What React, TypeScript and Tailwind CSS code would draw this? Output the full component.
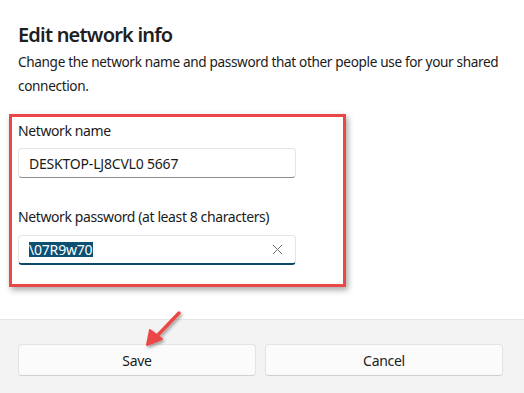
import React from "react";

export default function App() {
  const font = { fontFamily: '"Noto Sans", "Open Sans", sans-serif' };
  return (
    <div className="relative w-[524px] h-[393px] bg-white flex flex-col text-[#1b1b1b] overflow-hidden" style={font}>
      <div className="flex-1 flex flex-col px-[18px] pt-[21px]">
        <h1 className="text-[20px] leading-[28px] font-semibold tracking-[-0.8px] text-[#1f1f1f]">Edit network info</h1>
        <p className="mt-[1px] mr-[-18px] text-[13.6px] leading-[24px] tracking-[-0.35px]">
          Change the network name and password that other people use for your shared connection.
        </p>
        <div className="mt-[16px] ml-[-9px] w-[337px] border-[3px] border-[#ec4747] pl-[6px] pt-[4px] pb-[19px] shadow-[2px_3px_6px_rgba(0,0,0,0.35)] tracking-[-0.4px]">
          <div className="text-[14px] leading-[20px]">Network name</div>
          <div className="mt-[7px] w-[278px] h-[30px] rounded-[4px] border border-[#e5e5e5] border-b-[#8d8d8d] bg-white flex items-center pl-[10px] text-[14px] tracking-[-0.2px]">
            DESKTOP-LJ8CVL0 5667
          </div>
          <div className="mt-[29px] text-[14px] leading-[20px]">Network password (at least 8 characters)</div>
          <div className="mt-[8px] w-[278px] h-[30px] rounded-[4px] border border-[#e5e5e5] border-b-2 border-b-[#0b4a6b] bg-white flex items-center pl-[10px] pr-[12px] text-[14px] tracking-[-0.2px]">
            <span className="bg-[#0b4f72] text-white leading-[15px] pr-[1px]">\07R9w70</span>
            <span className="ml-auto flex">
              <svg width="11" height="11" viewBox="0 0 11 11">
                <path d="M1 1L10 10M10 1L1 10" stroke="#707070" strokeWidth="1" />
              </svg>
            </span>
          </div>
        </div>
      </div>
      <div className="h-[74px] bg-[#f3f3f3] border-t border-[#e5e5e5] flex gap-[9px] pl-[18px] pr-[21px] pt-[24px] tracking-[-0.3px]">
        <button className="w-[238px] h-[32px] rounded-[4px] bg-[#fbfbfb] border border-[#e3e3e3] border-b-[#cfcfcf] text-[14px]">Save</button>
        <button className="w-[238px] h-[32px] rounded-[4px] bg-[#fbfbfb] border border-[#e3e3e3] border-b-[#cfcfcf] text-[14px]">Cancel</button>
      </div>
      <svg className="absolute left-0 top-0 pointer-events-none" width="524" height="393" viewBox="0 0 524 393">
        <defs>
          <filter id="sh" x="-50%" y="-50%" width="200%" height="200%">
            <feDropShadow dx="1.5" dy="2" stdDeviation="1.5" floodColor="#000" floodOpacity="0.35" />
          </filter>
        </defs>
        <g filter="url(#sh)">
          <path d="M179 313 L157 336" stroke="#ec4747" strokeWidth="3.5" strokeLinecap="round" />
          <path d="M147 345 L150 330 L162 339 Z" fill="#ec4747" stroke="#ec4747" strokeWidth="2" strokeLinejoin="round" />
        </g>
      </svg>
    </div>
  );
}
